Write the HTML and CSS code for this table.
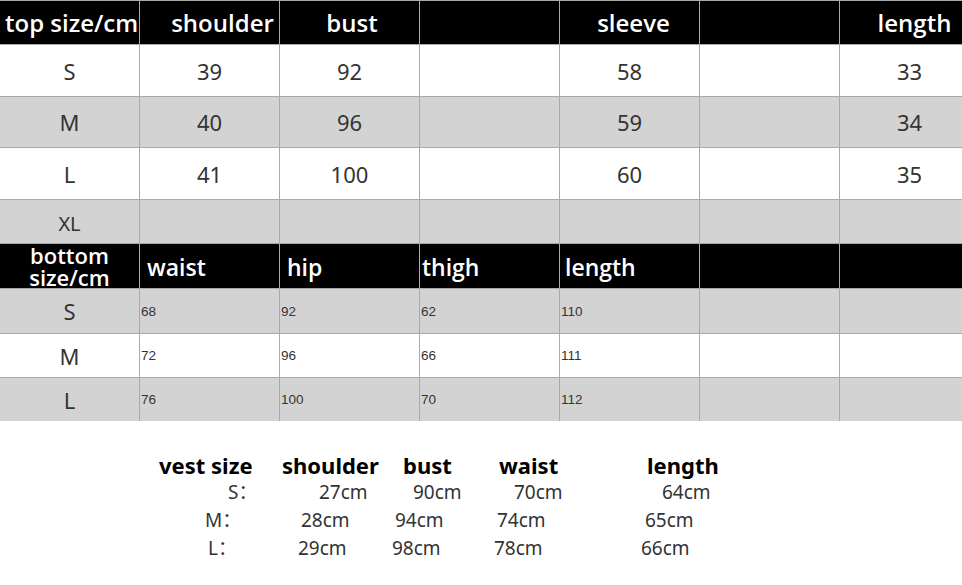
FILE: index.html
```html
<!DOCTYPE html>
<html>
<head>
<meta charset="utf-8">
<link rel="stylesheet" href="styles.css">
</head>
<body>
<div class="page">
  <div class="chart">
    <div class="cell head left">top size/cm</div>
    <div class="cell head sh">shoulder</div>
    <div class="cell head bu">bust</div>
    <div class="cell head"></div>
    <div class="cell head sl">sleeve</div>
    <div class="cell head"></div>
    <div class="cell head le">length</div>

    <div class="cell w sz">S</div>
    <div class="cell w num">39</div>
    <div class="cell w num">92</div>
    <div class="cell w"></div>
    <div class="cell w num">58</div>
    <div class="cell w"></div>
    <div class="cell w num">33</div>

    <div class="cell g sz">M</div>
    <div class="cell g num">40</div>
    <div class="cell g num">96</div>
    <div class="cell g"></div>
    <div class="cell g num">59</div>
    <div class="cell g"></div>
    <div class="cell g num">34</div>

    <div class="cell w sz">L</div>
    <div class="cell w num">41</div>
    <div class="cell w num">100</div>
    <div class="cell w"></div>
    <div class="cell w num">60</div>
    <div class="cell w"></div>
    <div class="cell w num">35</div>

    <div class="cell g sz xl">XL</div>
    <div class="cell g"></div>
    <div class="cell g"></div>
    <div class="cell g"></div>
    <div class="cell g"></div>
    <div class="cell g"></div>
    <div class="cell g"></div>

    <div class="cell head two"><span class="ln">bottom</span><span class="ln">size/cm</span></div>
    <div class="cell head bl p7">waist</div>
    <div class="cell head bl p7">hip</div>
    <div class="cell head bl p2">thigh</div>
    <div class="cell head bl p5">length</div>
    <div class="cell head"></div>
    <div class="cell head"></div>

    <div class="cell g sz">S</div>
    <div class="cell g sm">68</div>
    <div class="cell g sm">92</div>
    <div class="cell g sm">62</div>
    <div class="cell g sm">110</div>
    <div class="cell g"></div>
    <div class="cell g"></div>

    <div class="cell w sz">M</div>
    <div class="cell w sm">72</div>
    <div class="cell w sm">96</div>
    <div class="cell w sm">66</div>
    <div class="cell w sm">111</div>
    <div class="cell w"></div>
    <div class="cell w"></div>

    <div class="cell g sz">L</div>
    <div class="cell g sm">76</div>
    <div class="cell g sm">100</div>
    <div class="cell g sm">70</div>
    <div class="cell g sm">112</div>
    <div class="cell g"></div>
    <div class="cell g"></div>
  </div>

  <div class="vest">
    <div class="vrow vhead">
      <span>vest size</span><span>shoulder</span><span>bust</span><span>waist</span><span>length</span>
    </div>
    <div class="vrow vs">
      <span>S：</span><span>27cm</span><span>90cm</span><span>70cm</span><span>64cm</span>
    </div>
    <div class="vrow vm">
      <span>M：</span><span>28cm</span><span>94cm</span><span>74cm</span><span>65cm</span>
    </div>
    <div class="vrow vl">
      <span>L：</span><span>29cm</span><span>98cm</span><span>78cm</span><span>66cm</span>
    </div>
  </div>
</div>
</body>
</html>
```

FILE: styles.css
```css
html, body {
  margin: 0;
  padding: 0;
  background: #ffffff;
}

.page {
  width: 962px;
  height: 585px;
  overflow: hidden;
  font-family: "Noto Sans", "Noto Sans CJK SC", sans-serif;
}

.chart {
  width: 979px;
  display: grid;
  grid-template-columns: repeat(7, 139px);
  grid-template-rows: 43px 51px 50px 51px 43px 44px 44px 43px 43px;
  gap: 1px;
  padding-top: 1px;
  background: #a9a9a9;
}

.cell {
  display: flex;
  align-items: center;
  justify-content: center;
  overflow: hidden;
  white-space: nowrap;
}

.w { background: #ffffff; }
.g { background: #d3d3d3; }

.head {
  background: #000000;
  color: #ffffff;
  font-family: "Open Sans", "Noto Sans", sans-serif;
  font-weight: 600;
  font-size: 24px;
  padding-bottom: 1px;
}

.head.left { justify-content: flex-start; padding-left: 5px; }
.head.sh { padding-left: 26px; }
.head.bu { padding-left: 5px; }
.head.sl { padding-left: 8px; }
.head.le { padding-left: 10px; }

.head.two {
  flex-direction: column;
  font-size: 22px;
  line-height: 22px;
  padding-bottom: 0;
  overflow: visible;
}
.ln { display: block; }

.head.bl {
  justify-content: flex-start;
  font-size: 23px;
  padding-top: 2px;
  padding-bottom: 0;
}
.p7 { padding-left: 7px; }
.p2 { padding-left: 2px; }
.p5 { padding-left: 5px; }

.sz, .num {
  font-size: 22px;
  color: #333333;
}
.xl { font-size: 20px; padding-top: 3px; }

.sm {
  justify-content: flex-start;
  padding-left: 1px;
  font-family: "Liberation Sans", Arial, sans-serif;
  font-size: 13.5px;
  color: #333333;
}

.vest {
  margin-top: 31px;
}

.vrow {
  display: grid;
  white-space: nowrap;
}

.vhead {
  padding-left: 159px;
  grid-template-columns: 123px 121px 96px 148px auto;
  font-weight: 700;
  font-size: 22px;
  line-height: 26px;
  color: #000000;
}

.vs, .vm, .vl {
  font-size: 19px;
  line-height: 28px;
  color: #333333;
}
.vs { padding-left: 228px; grid-template-columns: 91px 94px 101px 148px auto; }
.vm { padding-left: 205px; grid-template-columns: 96px 94px 102px 148px auto; }
.vl { padding-left: 208px; grid-template-columns: 90px 94px 102px 147px auto; }
```
